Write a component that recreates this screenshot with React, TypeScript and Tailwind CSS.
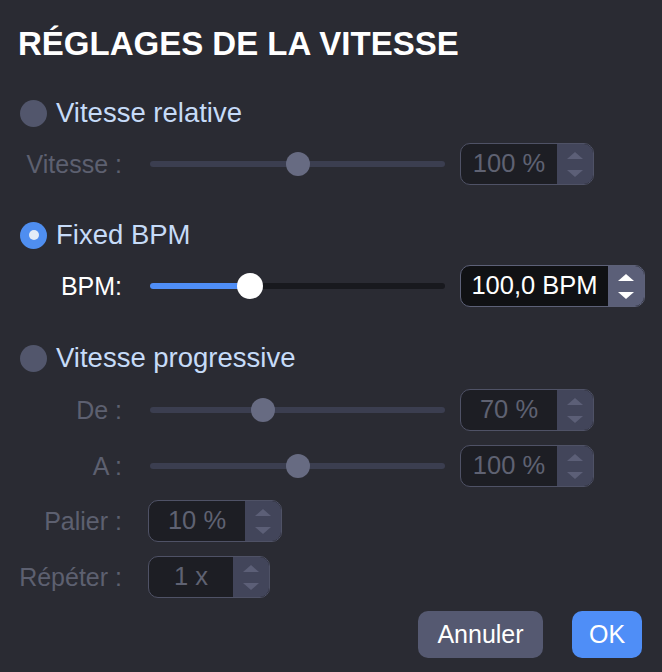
import React from 'react'

const FONT = { fontFamily: '"Liberation Sans", Arial, sans-serif' }

function Radio({ label, checked }: { label: string; checked?: boolean }) {
  return (
    <div className="mt-[36px] flex h-[30px] items-center">
      <span
        className={
          checked
            ? 'ml-[2px] flex h-[27px] w-[27px] items-center justify-center rounded-full bg-[#4f8ef0]'
            : 'ml-[2px] h-[27px] w-[27px] rounded-full bg-[#52566c]'
        }
      >
        {checked && <span className="h-[10px] w-[10px] rounded-full bg-[#e3ecf7]" />}
      </span>
      <span className="ml-[9px] text-[27.5px] leading-none text-[#c6dbf8]">{label}</span>
    </div>
  )
}

function Stepper({ active }: { active?: boolean }) {
  const up = active ? 'border-b-white' : 'border-b-[#5c5f77]'
  const down = active ? 'border-t-white' : 'border-t-[#5c5f77]'
  return (
    <div
      className={
        'flex w-[36px] flex-col items-center justify-center gap-[11px] ' +
        (active ? 'bg-[#5b5f78]' : 'bg-[#42455a]')
      }
    >
      <span className={'h-0 w-0 border-x-[8px] border-b-[7px] border-x-transparent ' + up} />
      <span className={'h-0 w-0 border-x-[8px] border-t-[7px] border-x-transparent ' + down} />
    </div>
  )
}

function NumBox({ value, width, active }: { value: string; width: string; active?: boolean }) {
  return (
    <div
      className={
        'flex h-[42px] overflow-hidden rounded-[10px] border-[1.5px] ' +
        width +
        (active ? ' border-[#5d6178] bg-[#101114]' : ' border-[#4f5266] bg-[#1d1e24]')
      }
    >
      <div
        className={
          'flex flex-1 items-center justify-center text-[25.5px] leading-none ' +
          (active ? 'text-white' : 'text-[#5f6272]')
        }
      >
        {value}
      </div>
      <Stepper active={active} />
    </div>
  )
}

function SliderRow({
  label,
  pos,
  value,
  mt,
  active,
}: {
  label: string
  pos: number
  value: string
  mt: string
  active?: boolean
}) {
  return (
    <div className={'flex h-[42px] items-center ' + mt}>
      <div
        className={
          'w-[104px] text-right text-[25px] leading-none ' + (active ? 'text-white' : 'text-[#5d6070]')
        }
      >
        {label}
      </div>
      <div className="relative ml-[28px] h-[6px] w-[295px] rounded-full">
        <div
          className={'absolute inset-0 rounded-full ' + (active ? 'bg-[#18191e]' : 'bg-[#3b3e50]')}
        />
        {active && (
          <div
            className="absolute inset-y-0 left-0 rounded-full bg-[#4f8ef7]"
            style={{ width: pos }}
          />
        )}
        <div
          className={
            'absolute top-1/2 -translate-x-1/2 -translate-y-1/2 rounded-full ' +
            (active ? 'h-[26px] w-[26px] bg-white' : 'h-[24px] w-[24px] bg-[#676b82]')
          }
          style={{ left: pos }}
        />
      </div>
      <div className="ml-[15px]">
        <NumBox value={value} width={active ? 'w-[185px]' : 'w-[134px]'} active={active} />
      </div>
    </div>
  )
}

function SmallRow({ label, value, width, mt }: { label: string; value: string; width: string; mt: string }) {
  return (
    <div className={'flex h-[42px] items-center ' + mt}>
      <div className="w-[104px] text-right text-[25px] leading-none text-[#5d6070]">{label}</div>
      <div className="ml-[26px]">
        <NumBox value={value} width={width} />
      </div>
    </div>
  )
}

export default function App() {
  return (
    <div className="h-[672px] w-[662px] bg-[#2a2b33] pl-[18px]" style={FONT}>
      <div className="flex flex-col">
        <h1 className="pt-[26px] text-[33px] font-bold leading-[36px] text-white">
          RÉGLAGES DE LA VITESSE
        </h1>

        <Radio label="Vitesse relative" />
        <SliderRow label="Vitesse :" pos={148} value="100 %" mt="mt-[15px]" />

        <div className="-mt-[1px]" />
        <Radio label="Fixed BPM" checked />
        <SliderRow label="BPM:" pos={100} value="100,0 BPM" mt="mt-[15px]" active />

        <Radio label="Vitesse progressive" />
        <SliderRow label="De :" pos={113} value="70 %" mt="mt-[16px]" />
        <SliderRow label="A :" pos={148} value="100 %" mt="mt-[14px]" />
        <SmallRow label="Palier :" value="10 %" width="w-[134px]" mt="mt-[13px]" />
        <SmallRow label="Répéter :" value="1 x" width="w-[122px]" mt="mt-[14px]" />

        <div className="mt-[13px] flex justify-end gap-[29px] pr-[20px]">
          <button
            type="button"
            className="h-[47px] w-[125px] rounded-[10px] bg-[#555971] text-[25px] text-white"
          >
            Annuler
          </button>
          <button
            type="button"
            className="h-[47px] w-[70px] rounded-[10px] bg-[#4f8ef7] text-[25px] text-white"
          >
            OK
          </button>
        </div>
      </div>
    </div>
  )
}
